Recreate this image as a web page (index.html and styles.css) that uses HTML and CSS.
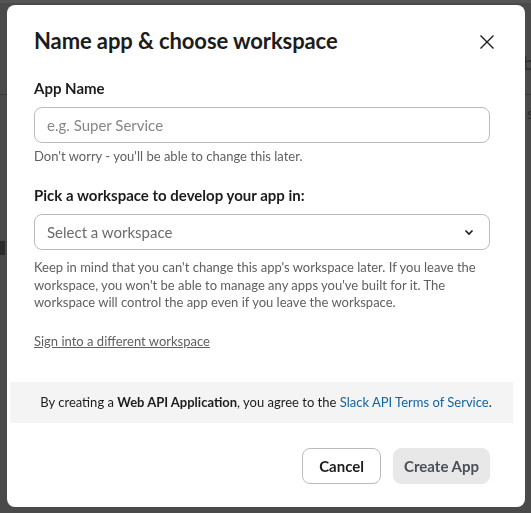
FILE: index.html
```html
<!DOCTYPE html>
<html lang="en">
<head>
    <meta charset="UTF-8">
    <meta name="viewport" content="width=device-width, initial-scale=1.0">
    <title>Create an app</title>
    <link rel="stylesheet" href="styles.css">
</head>
<body>
    <div class="page">
        <div class="page-top"></div>
        <div class="page-row page-row-a"><span class="peek-right">b</span></div>
        <div class="page-rule"></div>
        <div class="page-row page-row-b"><span class="peek-right">s</span></div>
        <div class="page-row page-row-c"><span class="peek-bar"></span></div>
    </div>

    <div class="overlay">
        <div class="modal">
            <div class="modal-header">
                <h1>Name app &amp; choose workspace</h1>
                <button class="close" aria-label="Close">
                    <svg width="16" height="16" viewBox="0 0 16 16">
                        <path d="M1.5 1.5 L14.5 14.5 M14.5 1.5 L1.5 14.5" stroke="#1d1c1d" stroke-width="1.4" fill="none"/>
                    </svg>
                </button>
            </div>

            <div class="modal-body">
                <label class="field-label" for="appName">App Name</label>
                <input class="field" type="text" id="appName" placeholder="e.g. Super Service">
                <p class="hint">Don't worry - you'll be able to change this later.</p>

                <label class="field-label second" for="workspace">Pick a workspace to develop your app in:</label>
                <div class="select" id="workspace">
                    <span>Select a workspace</span>
                    <svg width="10" height="7" viewBox="0 0 10 7">
                        <path d="M1.5 1.5 L5 5 L8.5 1.5" stroke="#1d1c1d" stroke-width="1.6" fill="none"/>
                    </svg>
                </div>
                <p class="hint para">Keep in mind that you can't change this app's workspace later. If you leave the workspace, you won't be able to manage any apps you've built for it. The workspace will control the app even if you leave the workspace.</p>

                <a class="signin" href="#">Sign into a different workspace</a>
            </div>

            <div class="terms">
                By creating a <b>Web API Application</b>, you agree to the <a href="#">Slack API Terms of Service</a>.
            </div>

            <div class="modal-footer">
                <button class="btn">Cancel</button>
                <button class="btn btn-create" disabled>Create App</button>
            </div>
        </div>
    </div>
</body>
</html>
```

FILE: styles.css
```css
body { margin: 0; font-family: 'Lato', 'Open Sans', sans-serif; background-color: #4a4a4a; color: #1d1c1d; width: 531px; height: 513px; overflow: hidden; }

/* dimmed page behind the dialog */
.page { height: 513px; position: relative; }
.page-top { height: 3px; background: #555555; }
.page-row { height: 20px; position: relative; font-size: 20px; line-height: 20px; color: #2c2c2c; }
.page-row-a { margin-top: 49px; }
.page-rule { height: 1px; background: #3a3a3a; margin-top: 22px; }
.page-row-b { margin-top: 8px; font-size: 16px; }
.page-row-c { margin-top: 118px; }
.peek-right { position: absolute; right: -3px; top: 0; }
.peek-bar { position: absolute; left: 0; top: 0; width: 5px; height: 14px; background: #2c2c2c; }

.overlay { position: fixed; inset: 0; display: flex; align-items: flex-start; padding: 5px 6px 6px 7px; }
.modal { width: 518px; height: 502px; background: white; border-radius: 8px; display: flex; flex-direction: column; }

.modal-header { display: flex; align-items: center; justify-content: space-between; padding: 21px 30px 0 27px; }
.modal-header h1 { margin: 0; font-size: 22px; line-height: 30px; font-weight: bold; letter-spacing: -0.1px; }
.close { border: none; background: none; padding: 0; width: 16px; height: 16px; margin-top: 2px; }
.close svg { display: block; }

.modal-body { padding: 21px 35px 0 27px; display: flex; flex-direction: column; }
.field-label { font-size: 15px; line-height: 22px; font-weight: bold; margin-bottom: 8px; }
.field-label.second { margin-top: 19px; }
.field, .select { box-sizing: border-box; height: 36px; border: 1px solid #bbbbbb; border-radius: 8px; padding: 0 12px; font-family: inherit; font-size: 15px; color: #1d1c1d; }
.field::placeholder { color: #868686; }
.select { display: flex; align-items: center; justify-content: space-between; color: #6b6b6b; }
.select svg { margin-right: 3px; }
.hint { margin: 4px 0 0; font-size: 13px; line-height: 18px; color: #616061; }
.hint.para { margin-top: 9px; line-height: 17.5px; }
.signin { margin-top: 20px; font-size: 13px; line-height: 18px; color: #616061; text-decoration: underline; align-self: flex-start; }

.terms { margin: 32px 12px 0 3px; height: 41px; line-height: 41px; background: #f4f4f4; text-align: center; padding-left: 9px; font-size: 13px; color: #1d1c1d; }
.terms b { font-weight: bold; }
.terms a { color: #1264a3; text-decoration: none; }

.modal-footer { display: flex; justify-content: flex-end; gap: 12px; padding: 25px 35px 0 0; }
.btn { box-sizing: border-box; height: 36px; min-width: 79px; padding: 0 10px; border-radius: 8px; border: 1px solid #bbbbbb; background: white; font-family: inherit; font-size: 15px; font-weight: bold; color: #1d1c1d; }
.btn-create { border-color: #e8e8e8; background: #e8e8e8; color: #4a4f5a; }
```
